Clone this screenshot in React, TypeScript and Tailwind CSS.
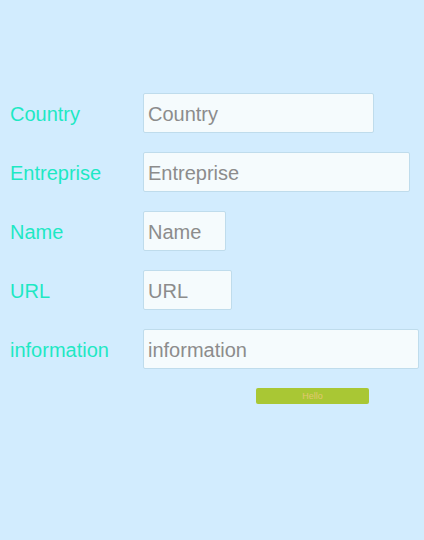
import React from 'react'

const fields = [
  { label: 'Country', width: 'w-[231px]' },
  { label: 'Entreprise', width: 'w-[267px]' },
  { label: 'Name', width: 'w-[83px]' },
  { label: 'URL', width: 'w-[89px]' },
  { label: 'information', width: 'w-[276px]' },
]

export default function App() {
  return (
    <div className="min-h-[540px] w-full bg-[#d2ecfe] pt-[93px] pl-[10px] font-[Liberation_Sans]">
      <form className="flex flex-col gap-[19px]">
        {fields.map((f) => (
          <div key={f.label} className="flex items-center">
            <label className="w-[133px] pt-[2px] font-[Liberation_Sans] text-[20px] leading-none text-[#1ee8c4]">
              {f.label}
            </label>
            <input
              placeholder={f.label}
              className={`${f.width} h-[40px] rounded-[2px] border border-[#bfdcec] bg-[#f5fbfd] px-[4px] pt-[2px] font-[Liberation_Sans] text-[20px] text-[#888] placeholder:text-[#8c8c8c] outline-none`}
            />
          </div>
        ))}
      </form>
      <div className="mt-[19px] flex pl-[246px]">
        <button className="flex h-[16px] w-[113px] items-center justify-center rounded-[2px] bg-[#a9c734] font-[Liberation_Sans] text-[9px] leading-none text-[#e2c870]">
          Hello
        </button>
      </div>
    </div>
  )
}
